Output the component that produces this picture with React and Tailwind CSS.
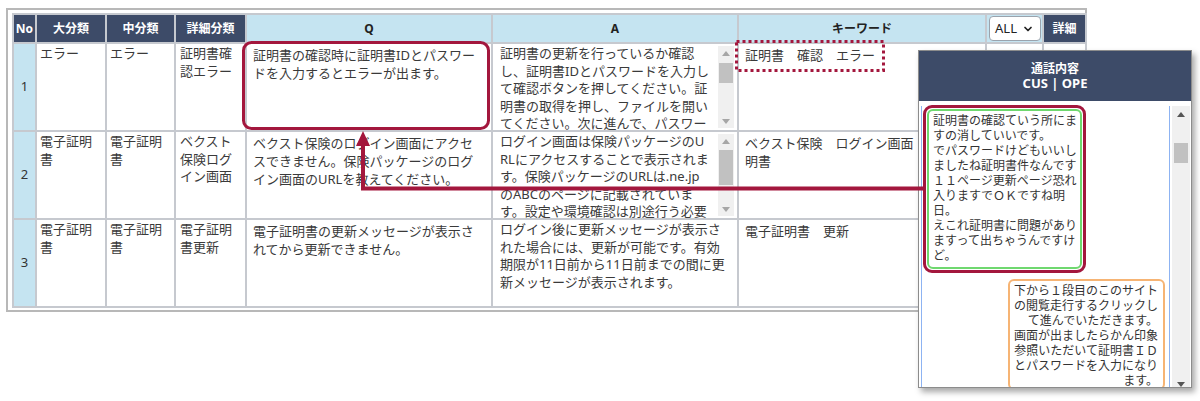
import React from "react";
import { ChevronDown } from "lucide-react";

const rows = [
  {
    no: 1,
    large: "エラー",
    mid: "エラー",
    detail: "証明書確\n認エラー",
    q: "証明書の確認時に証明書IDとパスワー\nドを入力するとエラーが出ます。",
    a: "証明書の更新を行っているか確認\nし、証明書IDとパスワードを入力し\nて確認ボタンを押してください。証\n明書の取得を押し、ファイルを開い\nてください。次に進んで、パスワー\nドを入力してください。",
    thumb: "mt-[3px] h-[20px]",
    kw: "証明書　確認　エラー",
  },
  {
    no: 2,
    large: "電子証明\n書",
    mid: "電子証明\n書",
    detail: "ベクスト\n保険ログ\nイン画面",
    q: "ベクスト保険のログイン画面にアクセ\nスできません。保険パッケージのログ\nイン画面のURLを教えてください。",
    a: "ログイン画面は保険パッケージのU\nRLにアクセスすることで表示されま\nす。保険パッケージのURLは.ne.jp\nのABCのページに記載されていま\nす。設定や環境確認は別途行う必要\nがあります。",
    thumb: "mt-[2px] h-[35px]",
    kw: "ベクスト保険　ログイン画面　電子証\n明書",
  },
  {
    no: 3,
    large: "電子証明\n書",
    mid: "電子証明\n書",
    detail: "電子証明\n書更新",
    q: "電子証明書の更新メッセージが表示さ\nれてから更新できません。",
    a: "ログイン後に更新メッセージが表示さ\nれた場合には、更新が可能です。有効\n期限が11日前から11日前までの間に更\n新メッセージが表示されます。",
    kw: "電子証明書　更新",
  },
];

const customerText =
  "証明書の確認ていう所にま\nすの消していいです。\nでパスワードけどもいいし\nましたね証明書件なんです\n１１ページ更新ページ恐れ\n入りますでＯＫですね明\n日。\nえこれ証明書に問題があり\nますって出ちゃうんですけ\nど。";

const operatorText =
  "下から１段目のこのサイト\nの閲覧走行するクリックし\nて進んでいただきます。\n画面が出ましたらかん印象\n参照いただいて証明書ＩＤ\nとパスワードを入力になり\nます。";

const Arrow = ({ down, color, h = "h-[14px]" }) => (
  <div className={`flex w-full items-center justify-center ${h}`}>
    <svg width="8" height="5" viewBox="0 0 8 5">
      <path d={down ? "M0 0 L8 0 L4 5Z" : "M0 5 L4 0 L8 5Z"} fill={color} />
    </svg>
  </div>
);

// plain scrollbar look for the answer boxes
const ScrollBar = ({ thumb }) => (
  <div className="my-[2px] flex w-[16px] flex-col items-center bg-[#f0f0f0]">
    <Arrow color="#a6a6a6" />
    <div className={`w-[14px] bg-[#c1c1c1] ${thumb}`} />
    <div className="flex-1" />
    <Arrow down color="#a6a6a6" />
  </div>
);

const th = "border-2 border-[#c6c9cf] text-[12px] font-bold";
const dark = `${th} bg-[#3d4b68] text-white`;
const light = `${th} bg-[#c5e4f1] text-[#222]`;
const td = "border-2 border-[#c6c9cf] align-top whitespace-pre-line text-[13px] leading-[17.5px] text-[#3a3a3a]";

const FaqTable = () => (
  <table className="w-[1073px] table-fixed border-collapse">
    <colgroup>
      <col className="w-[23px]" />
      <col className="w-[70px]" />
      <col className="w-[69px]" />
      <col className="w-[71px]" />
      <col className="w-[246px]" />
      <col className="w-[246px]" />
      <col className="w-[248px]" />
      <col className="w-[57px]" />
      <col className="w-[43px]" />
    </colgroup>
    <thead>
      <tr className="h-[29px]">
        <th className={dark}>No</th>
        <th className={dark}>大分類</th>
        <th className={dark}>中分類</th>
        <th className={dark}>詳細分類</th>
        <th className={light}>Q</th>
        <th className={light}>A</th>
        <th className={light}>キーワード</th>
        <th className={light}>
          <div className="mx-auto flex h-[25px] w-[52px] items-center justify-center gap-[5px] rounded-[4px] border border-[#9aa3ad] bg-white text-[13px] font-normal text-[#222]">
            ALL
            <ChevronDown size={12} strokeWidth={3.5} />
          </div>
        </th>
        <th className={dark}>詳細</th>
      </tr>
    </thead>
    <tbody>
      {rows.map((r) => (
        <tr key={r.no} className="h-[88px]">
          <td className="border-2 border-[#c6c9cf] bg-[#c5e4f1] text-center align-middle text-[13px] text-[#333]">
            {r.no}
          </td>
          <td className={`${td} pl-[3px] pt-[1px]`}>{r.large}</td>
          <td className={`${td} pl-[3px] pt-[1px]`}>{r.mid}</td>
          <td className={`${td} pl-[4px] pt-[1px]`}>{r.detail}</td>
          <td className={`${td} pl-[6px] pt-[2px] leading-[18px]`}>{r.q}</td>
          <td className={`${td} p-0`}>
            <div className="flex h-[86px] pr-[3px]">
              <div className="flex-1 overflow-hidden pl-[7px] pt-[1px]">{r.a}</div>
              {r.thumb && <ScrollBar thumb={r.thumb} />}
            </div>
          </td>
          <td className={`${td} pl-[6px] pt-[2px] leading-[18px]`}>{r.kw}</td>
          <td className={td} />
          <td className={td} />
        </tr>
      ))}
    </tbody>
  </table>
);

const CallPanel = () => (
  <div className="absolute left-[918px] top-[50px] flex h-[338px] w-[274px] flex-col overflow-hidden border border-[#8c8c8c] bg-white shadow-[3px_4px_6px_rgba(0,0,0,0.35)]">
    <div className="flex h-[50px] shrink-0 flex-col items-center justify-center bg-[#3d4b68] text-[12px] font-bold leading-[15px] text-white">
      <span>通話内容</span>
      <span className="text-[13px]">CUS | OPE</span>
    </div>
    <div className="flex flex-1 gap-[2px] pl-[2px] pr-[1px] pt-[5px]">
      <div className="flex w-[249px] flex-col gap-[6px] border-x border-[#8db3f2] px-[1px] text-[12px] leading-[15px] text-[#333]">
        <div className="-mt-[1px] w-[163px] rounded-[9px] border-[3px] border-[#a3173d] p-px">
          <div className="whitespace-pre-line rounded-[6px] border-2 border-[#6fd86f] pb-[4px] pl-[4px] pt-[2px]">
            {customerText}
          </div>
        </div>
        <div className="mr-[3px] w-[157px] self-end whitespace-pre-line rounded-[6px] border-2 border-[#f6b474] pr-[5px] pt-[2px] text-right">
          {operatorText}
        </div>
      </div>
      <div className="flex w-[18px] flex-col items-center bg-[#f0f0f0]">
        <Arrow color="#555" h="h-[16px]" />
        <div className="mt-[21px] h-[20px] w-[14px] bg-[#c1c1c1]" />
        <div className="flex-1" />
        <Arrow down color="#555" h="h-[12px]" />
      </div>
    </div>
  </div>
);

// red markup drawn over the table and the panel
const Markup = () => (
  <svg className="pointer-events-none absolute left-0 top-0" width="1200" height="401">
    <rect x="243.5" y="42.5" width="245" height="86" rx="8" fill="none" stroke="#a3173d" strokeWidth="3" />
    <rect
      x="736.5"
      y="41.5"
      width="147"
      height="29"
      fill="none"
      stroke="#a3173d"
      strokeWidth="3"
      strokeDasharray="3 3"
    />
    <polyline points="924,188.5 363,188.5 363,143" fill="none" stroke="#a3173d" strokeWidth="4" />
    <polygon points="363,131 356,146 370,146" fill="#a3173d" />
  </svg>
);

const App = () => {
  return (
    <div className="relative h-[401px] w-[1200px] overflow-hidden bg-white font-['Noto_Sans','Noto_Sans_CJK_JP',sans-serif]">
      <div className="ml-[6px] mt-[8px] h-[304px] w-[1081px] border-2 border-[#b8b8b8] pl-[4px] pt-[3px]">
        <FaqTable />
      </div>
      <CallPanel />
      <Markup />
    </div>
  );
};

export default App;
